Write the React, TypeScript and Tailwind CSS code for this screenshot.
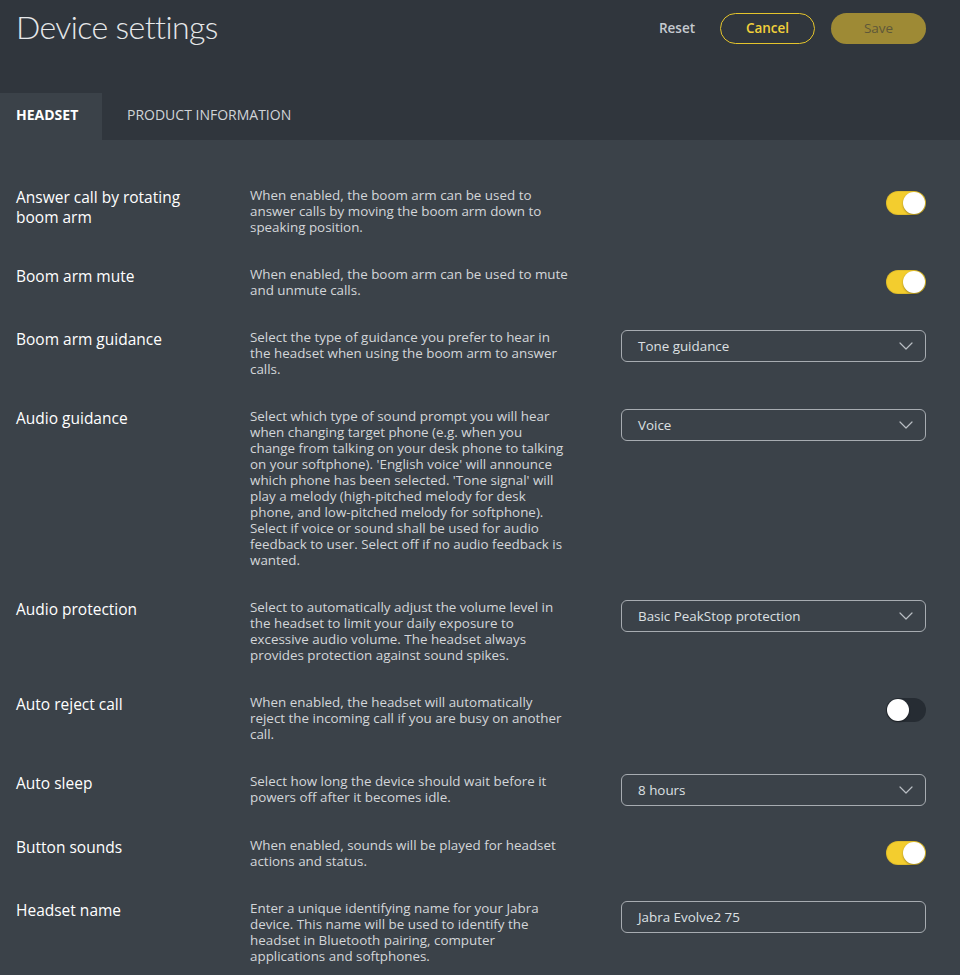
import React from "react";

type Row = {
  label: string;
  desc: string;
  control: { kind: "toggle"; on: boolean } | { kind: "select"; value: string } | { kind: "input"; value: string };
};

const rows: Row[] = [
  {
    label: "Answer call by rotating boom arm",
    desc: "When enabled, the boom arm can be used to answer calls by moving the boom arm down to speaking position.",
    control: { kind: "toggle", on: true },
  },
  {
    label: "Boom arm mute",
    desc: "When enabled, the boom arm can be used to mute and unmute calls.",
    control: { kind: "toggle", on: true },
  },
  {
    label: "Boom arm guidance",
    desc: "Select the type of guidance you prefer to hear in the headset when using the boom arm to answer calls.",
    control: { kind: "select", value: "Tone guidance" },
  },
  {
    label: "Audio guidance",
    desc: "Select which type of sound prompt you will hear when changing target phone (e.g. when you change from talking on your desk phone to talking on your softphone). 'English voice' will announce which phone has been selected. 'Tone signal' will play a melody (high-pitched melody for desk phone, and low-pitched melody for softphone). Select if voice or sound shall be used for audio feedback to user. Select off if no audio feedback is wanted.",
    control: { kind: "select", value: "Voice" },
  },
  {
    label: "Audio protection",
    desc: "Select to automatically adjust the volume level in the headset to limit your daily exposure to excessive audio volume. The headset always provides protection against sound spikes.",
    control: { kind: "select", value: "Basic PeakStop protection" },
  },
  {
    label: "Auto reject call",
    desc: "When enabled, the headset will automatically reject the incoming call if you are busy on another call.",
    control: { kind: "toggle", on: false },
  },
  {
    label: "Auto sleep",
    desc: "Select how long the device should wait before it powers off after it becomes idle.",
    control: { kind: "select", value: "8 hours" },
  },
  {
    label: "Button sounds",
    desc: "When enabled, sounds will be played for headset actions and status.",
    control: { kind: "toggle", on: true },
  },
  {
    label: "Headset name",
    desc: "Enter a unique identifying name for your Jabra device. This name will be used to identify the headset in Bluetooth pairing, computer applications and softphones.",
    control: { kind: "input", value: "Jabra Evolve2 75" },
  },
];

function Toggle({ on }: { on: boolean }) {
  return on ? (
    <div className="mt-[4px] w-[40px] h-[24px] rounded-full bg-[#f3cd2e] flex items-center justify-end pr-[1px] shadow-[inset_0_0_0_1px_rgba(0,0,0,0.08)]">
      <div className="w-[22px] h-[22px] rounded-full bg-white shadow-[0_1px_2px_rgba(0,0,0,0.35)]" />
    </div>
  ) : (
    <div className="mt-[4px] w-[40px] h-[24px] rounded-full bg-[#262c33] flex items-center justify-start pl-[1px]">
      <div className="w-[22px] h-[22px] rounded-full bg-white shadow-[0_1px_2px_rgba(0,0,0,0.35)]" />
    </div>
  );
}

function Select({ value }: { value: string }) {
  return (
    <div className="mt-[1px] w-[305px] h-[32px] rounded-[6px] border border-[#a7acb1] flex items-center justify-between pl-[16px] pr-[12px] text-[13.4px] text-[#dde0e3]">
      <span>{value}</span>
      <svg width="14" height="8" viewBox="0 0 14 8" fill="none">
        <path d="M1 1l6 6 6-6" stroke="#b9bec3" strokeWidth="1.2" strokeLinecap="round" strokeLinejoin="round" />
      </svg>
    </div>
  );
}

function Input({ value }: { value: string }) {
  return (
    <div className="mt-[1px] w-[305px] h-[32px] rounded-[6px] border border-[#a7acb1] flex items-center pl-[16px] text-[13.4px] text-[#dde0e3]">
      {value}
    </div>
  );
}

export default function App() {
  return (
    <div
      className="w-[960px] h-[975px] overflow-hidden bg-[#3b4249]"
      style={{ fontFamily: '"Open Sans", "Noto Sans", sans-serif' }}
    >
      <div className="bg-[#30363d]">
        <div className="h-[93px] flex items-start justify-between pl-[16px] pr-[34px]">
          <h1
            className="mt-[7px] text-[32px] font-light text-[#e6e8ea] leading-[40px] tracking-[-0.6px]"
            style={{ fontFamily: 'Lato, "Open Sans", sans-serif' }}
          >
            Device settings
          </h1>
          <div className="mt-[13px] flex items-center">
            <span className="text-[13.5px] font-semibold text-[#c5cad0] mr-[25px]">Reset</span>
            <div className="w-[95px] h-[31px] rounded-full border-[1.5px] border-[#e4c42c] flex items-center justify-center text-[13.5px] font-semibold text-[#f1d03a]">
              Cancel
            </div>
            <div className="ml-[16px] w-[95px] h-[31px] rounded-full bg-[#9e8a35] flex items-center justify-center text-[13.5px] text-[#5e5839]">
              Save
            </div>
          </div>
        </div>
        <div className="h-[47px] flex items-stretch">
          <div className="w-[102px] bg-[#3b4249] flex items-center pl-[16px] pb-[4px] text-[14px] font-bold text-white">
            HEADSET
          </div>
          <div className="flex items-center pl-[25px] pb-[4px] text-[14px] text-[#d0d4d8]">PRODUCT INFORMATION</div>
        </div>
      </div>

      <div className="pt-[47px] pl-[16px] pr-[34px] flex flex-col gap-[31px]">
        {rows.map((r) => (
          <div key={r.label} className="flex items-start">
            <div className="w-[234px] pr-[30px] text-[15.5px] leading-[20px] text-white">{r.label}</div>
            <div className="w-[320px] text-[13.4px] leading-[16px] text-[#d3d6d9]">{r.desc}</div>
            <div className="flex-1 flex justify-end">
              {r.control.kind === "toggle" && <Toggle on={r.control.on} />}
              {r.control.kind === "select" && <Select value={r.control.value} />}
              {r.control.kind === "input" && <Input value={r.control.value} />}
            </div>
          </div>
        ))}
      </div>
    </div>
  );
}
